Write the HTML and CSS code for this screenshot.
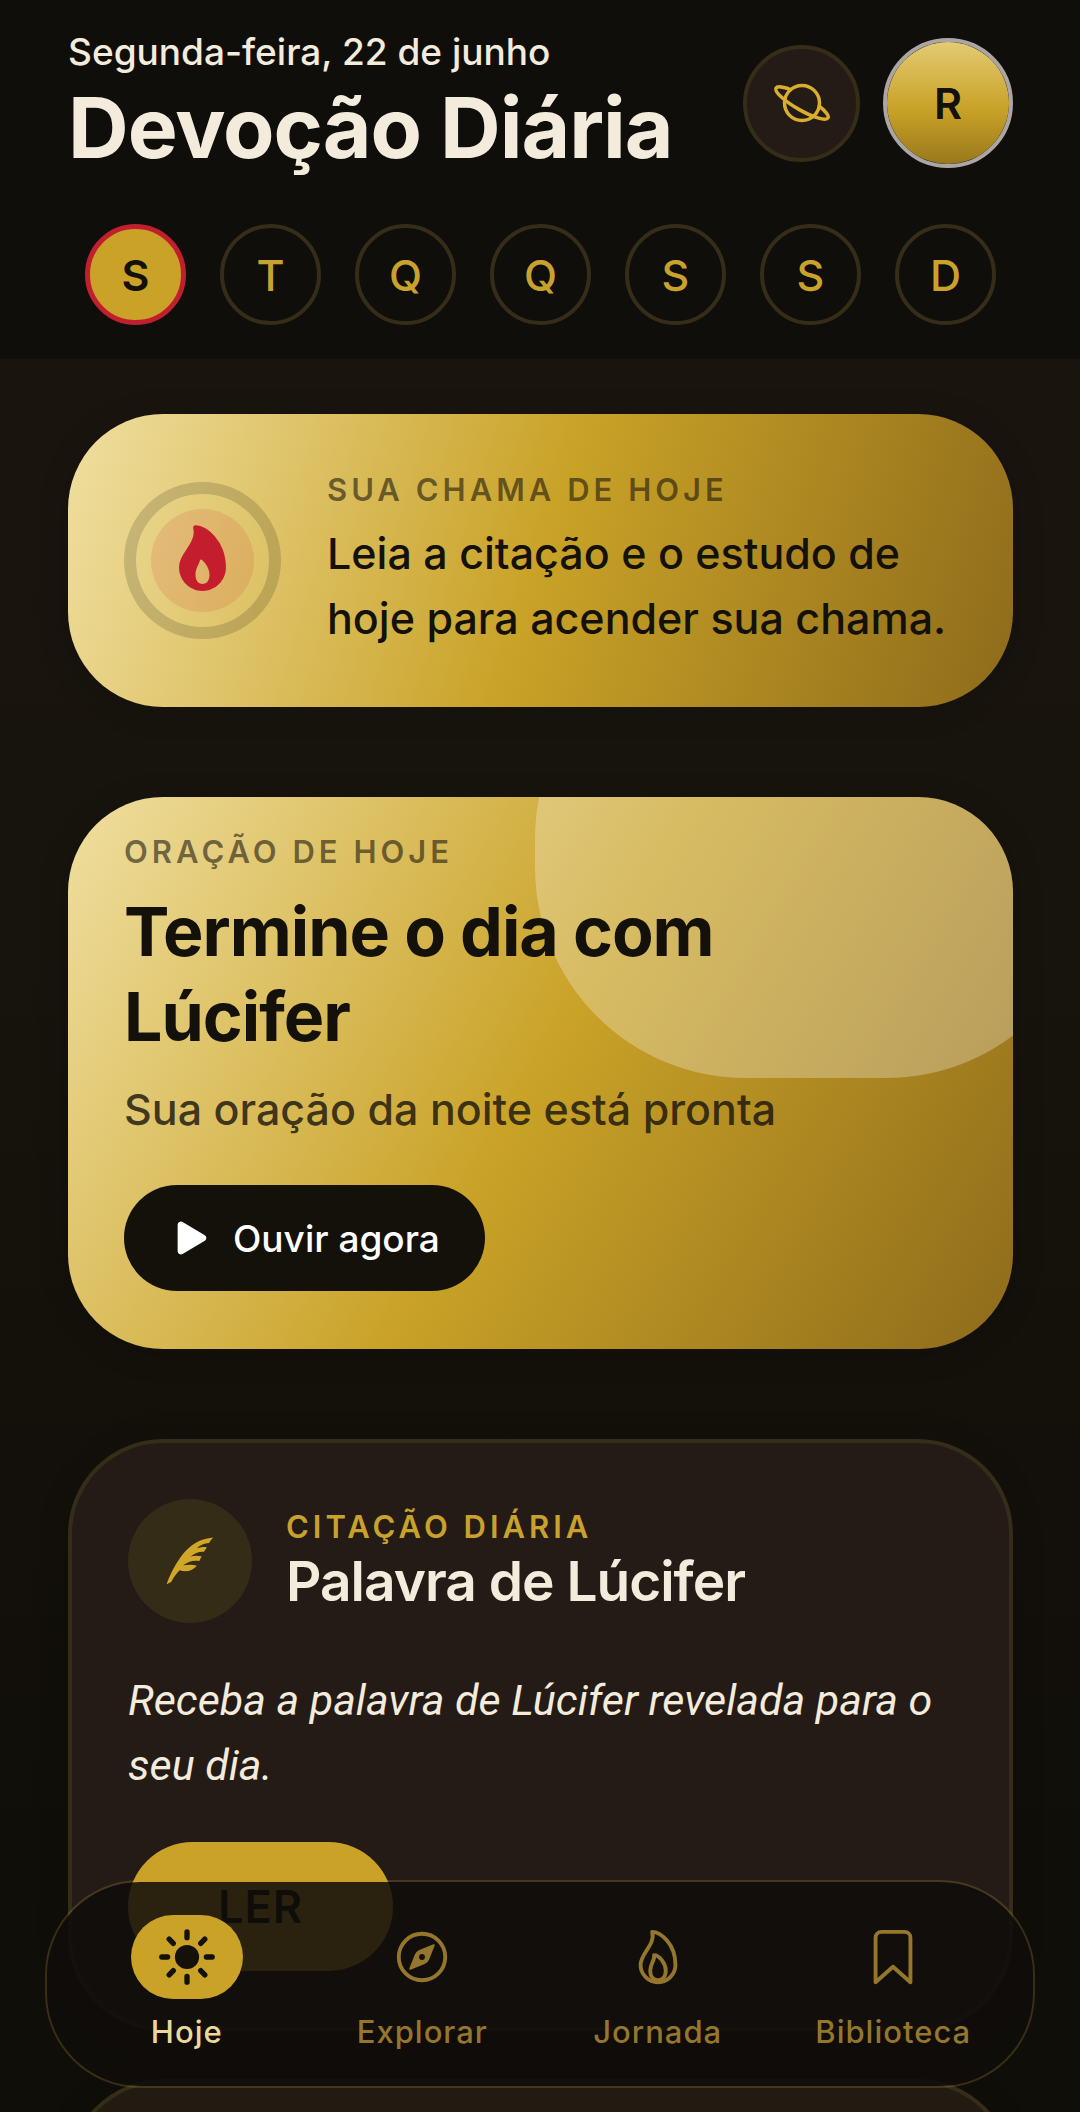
FILE: index.html
```html
<!DOCTYPE html>
<html lang="pt-BR">
<head>
<meta charset="UTF-8">
<meta name="viewport" content="width=device-width, initial-scale=1.0">
<title>Devoção Diária</title>
<link rel="stylesheet" href="styles.css">
</head>
<body>
<div class="app">
  <header class="header">
    <div class="header-top">
      <div class="header-text">
        <p class="date">Segunda-feira, 22 de junho</p>
        <h1 class="title">Devoção Diária</h1>
      </div>
      <div class="header-actions">
        <button class="planet-button" type="button">
          <svg class="icon-planet" viewBox="0 0 512 512" fill="none" stroke="currentColor" stroke-width="32" stroke-linecap="round" stroke-miterlimit="10">
            <path d="M413.48 284.46c58.87 47.24 91.61 89 80.31 108.55-17.85 30.85-138.78-5.48-270.1-81.15S.37 149.84 18.21 119c11.16-19.28 62.58-12.32 131.64 14.09"/>
            <circle cx="256" cy="256" r="160"/>
          </svg>
        </button>
        <button class="avatar" type="button">R</button>
      </div>
    </div>
    <div class="days">
      <button class="day active" type="button">S</button>
      <button class="day" type="button">T</button>
      <button class="day" type="button">Q</button>
      <button class="day" type="button">Q</button>
      <button class="day" type="button">S</button>
      <button class="day" type="button">S</button>
      <button class="day" type="button">D</button>
    </div>
  </header>

  <main class="content">
    <section class="card flame-card">
      <div class="ring">
        <div class="ring-inner">
          <svg class="icon-flame" viewBox="0 16 512 512" fill="currentColor">
            <path d="M394.23 197.56a300.67 300.67 0 0 0-53.37-90C301.2 61.65 249.05 32 208 32a16 16 0 0 0-15.48 20c13.87 53-14.88 97.07-45.31 143.72C122 234.36 96 274.27 96 320c0 88.22 71.78 160 160 160s160-71.78 160-160c0-43.3-7.32-84.49-21.77-122.44zM288.33 418.69C278 429.69 265.05 432 256 432s-22-2.31-32.33-13.31S208 390.24 208 368c0-25.14 8.82-44.28 17.34-62.78 4.95-10.74 10-21.67 13-33.37a8 8 0 0 1 12.49-4.51A126.48 126.48 0 0 1 275 292c18.17 24 29 52.42 29 76 0 22.24-5.32 39.72-15.67 50.69z"/>
          </svg>
        </div>
      </div>
      <div class="flame-text">
        <p class="label">SUA CHAMA DE HOJE</p>
        <p class="flame-message">Leia a citação e o estudo de hoje para acender sua chama.</p>
      </div>
    </section>

    <section class="card prayer-card">
      <p class="label">ORAÇÃO DE HOJE</p>
      <h2 class="prayer-title">Termine o dia com Lúcifer</h2>
      <p class="prayer-subtitle">Sua oração da noite está pronta</p>
      <button class="listen-button" type="button">
        <svg class="icon-play" viewBox="0 0 512 512" fill="currentColor">
          <path d="M133 440a35.37 35.37 0 0 1-17.5-4.67c-12-6.8-19.46-20-19.46-34.33V111c0-14.37 7.46-27.53 19.46-34.33a35.13 35.13 0 0 1 35.77.45l247.85 148.36a36 36 0 0 1 0 61l-247.89 148.4A35.5 35.5 0 0 1 133 440z"/>
        </svg>
        Ouvir agora
      </button>
    </section>

    <section class="card dark-card">
      <div class="quote-head">
        <div class="quote-icon">
          <svg class="icon-feather" viewBox="0 0 24 24" fill="currentColor">
            <path d="M22 2S14.36 1.63 8.34 9.88C3.72 16.21 2 22 2 22l1.94-1C5.38 18.5 6.13 17.47 7.54 16c2.53.74 5.17.65 7.46-2-2-.56-3.6-.43-5.96-.19C11.69 12 13.5 11.6 16 12l1-2c-1.8-.34-3-.37-4.78.04C14.19 8.65 15.56 7.87 18 8l1.21-1.93c-1.56-.11-2.5.06-4.29.5C16.53 5.11 18 4.45 20.14 4.32c0 0 1.05-1.89 1.86-2.32z"/>
          </svg>
        </div>
        <div>
          <p class="label gold">CITAÇÃO DIÁRIA</p>
          <h2 class="quote-title">Palavra de Lúcifer</h2>
        </div>
      </div>
      <p class="quote-text">Receba a palavra de Lúcifer revelada para o seu dia.</p>
      <button class="read-button" type="button">LER</button>
    </section>

    <section class="card dark-card next-card"></section>
  </main>

  <nav class="tab-bar">
    <a class="tab active" href="#hoje">
      <span class="tab-icon">
        <svg viewBox="0 0 512 512" fill="none" stroke="currentColor" stroke-width="44" stroke-linecap="round">
          <path d="M256 48v48M256 416v48M403.08 108.92l-33.94 33.94M142.86 369.14l-33.94 33.94M464 256h-48M96 256H48M403.08 403.08l-33.94-33.94M142.86 142.86l-33.94-33.94"/>
          <circle cx="256" cy="256" r="100" fill="currentColor" stroke="none"/>
        </svg>
      </span>
      Hoje
    </a>
    <a class="tab" href="#explorar">
      <span class="tab-icon">
        <svg viewBox="0 0 512 512" fill="none">
          <circle cx="256" cy="256" r="192" stroke="currentColor" stroke-width="32"/>
          <path fill="currentColor" d="M350.67 150.93l-117.2 46.88a64 64 0 0 0-35.66 35.66l-46.88 117.2a8 8 0 0 0 10.4 10.4l117.2-46.88a64 64 0 0 0 35.66-35.66l46.88-117.2a8 8 0 0 0-10.4-10.4zM256 280a24 24 0 1 1 24-24 24 24 0 0 1-24 24z"/>
        </svg>
      </span>
      Explorar
    </a>
    <a class="tab" href="#jornada">
      <span class="tab-icon">
        <svg viewBox="0 0 512 512" fill="none" stroke="currentColor" stroke-width="32" stroke-linejoin="round">
          <path d="M112 320c0-93 124-165 96-272 66 0 192 96 192 272a144 144 0 0 1-288 0z"/>
          <path d="M320 368c0 57.71-32 80-64 80s-64-22.29-64-80 40-86 32-128c42 0 96 70.29 96 128z"/>
        </svg>
      </span>
      Jornada
    </a>
    <a class="tab" href="#biblioteca">
      <span class="tab-icon">
        <svg viewBox="0 0 512 512" fill="none" stroke="currentColor" stroke-width="32" stroke-linejoin="round">
          <path d="M352 48H160a48 48 0 0 0-48 48v368l144-128 144 128V96a48 48 0 0 0-48-48z"/>
        </svg>
      </span>
      Biblioteca
    </a>
  </nav>
</div>
</body>
</html>
```

FILE: styles.css
```css
* {
  margin: 0;
  padding: 0;
  box-sizing: border-box;
}

body {
  background: #0f0d09;
  font-family: Inter, "Liberation Sans", sans-serif;
  color: #f3ebdc;
}

button {
  font-family: inherit;
  border: none;
  cursor: pointer;
}

.app {
  position: relative;
  height: 100vh;
  display: flex;
  flex-direction: column;
  overflow: hidden;
  background: linear-gradient(#1b1510, #17130d 45%, #100e09 90%);
}

/* Header */
.header {
  padding: 28px 67px 34px 68px;
  background: #100e0b;
}

.header-top {
  display: flex;
  justify-content: space-between;
  align-items: center;
  margin-bottom: 46px;
}

.date {
  font-size: 37px;
  line-height: 48px;
  font-weight: 500;
  margin-bottom: 2px;
}

.title {
  font-size: 84px;
  line-height: 100px;
  font-weight: 700;
  letter-spacing: -1px;
}

.header-actions {
  display: flex;
  align-items: center;
  gap: 23px;
}

.planet-button {
  width: 117px;
  height: 117px;
  display: flex;
  align-items: center;
  justify-content: center;
  border: 4px solid #352d17;
  border-radius: 50%;
  background: #241b16;
  color: #d9ae2f;
}

.icon-planet {
  width: 56px;
  height: 56px;
  overflow: visible;
}

.avatar {
  width: 130px;
  height: 130px;
  border: 4px solid #aba5a3;
  border-radius: 50%;
  background: linear-gradient(#e3cb74, #c9a227 55%, #98781c) padding-box;
  color: #14110b;
  font-size: 43px;
  font-weight: 600;
}

/* Week days */
.days {
  display: grid;
  grid-template-columns: repeat(7, 1fr);
  justify-items: center;
}

.day {
  width: 101px;
  height: 101px;
  border: 4px solid #352d17;
  border-radius: 50%;
  background: transparent;
  color: #c9a22e;
  font-size: 43px;
  font-weight: 500;
}

.day.active {
  border: 5px solid #bf1f2e;
  background: #c9a227;
  color: #14110b;
  font-weight: 600;
}

/* Cards */
.content {
  flex: 1;
  padding: 55px 67px 0 68px;
  overflow: hidden;
}

.card {
  border-radius: 95px;
  margin-bottom: 90px;
  box-shadow: 0 4px 32px rgba(10, 8, 5, 0.16);
}

.label {
  font-size: 31px;
  line-height: 40px;
  font-weight: 600;
  letter-spacing: 4px;
  color: rgba(20, 17, 11, 0.58);
}

.label.gold {
  color: #c9a22e;
}

.flame-card {
  display: flex;
  align-items: center;
  gap: 46px;
  padding: 56px;
  background: linear-gradient(107deg, #f0dfa0, #c9a227 50%, #8e6b1b);
}

.ring {
  flex-shrink: 0;
  width: 157px;
  height: 157px;
  display: flex;
  align-items: center;
  justify-content: center;
  border: 12px solid rgba(20, 17, 11, 0.16);
  border-radius: 50%;
}

.ring-inner {
  width: 103px;
  height: 103px;
  display: flex;
  align-items: center;
  justify-content: center;
  border-radius: 50%;
  background: rgba(204, 60, 50, 0.14);
  color: #c41e2e;
}

.icon-flame {
  width: 75px;
  height: 75px;
}

.flame-text .label {
  margin-bottom: 11px;
}

.flame-message {
  font-size: 43px;
  line-height: 65px;
  font-weight: 500;
  color: #14110b;
}

.prayer-card {
  position: relative;
  overflow: hidden;
  padding: 35px 56px 58px;
  background: linear-gradient(120deg, #f0dfa0, #c9a227 50%, #8e6b1b);
}

/* Light shape in the corner, under the text */
.prayer-card::before {
  content: '';
  position: absolute;
  top: -169px;
  right: -84px;
  width: 562px;
  height: 450px;
  border-radius: 211px;
  background: rgba(255, 255, 255, 0.28);
}

.prayer-card > * {
  position: relative;
}

.prayer-title {
  margin-top: 17px;
  max-width: 640px;
  font-size: 68px;
  line-height: 85px;
  font-weight: 700;
  letter-spacing: -1px;
  color: #14110b;
}

.prayer-subtitle {
  margin: 20px 0 46px;
  font-size: 43px;
  line-height: 60px;
  font-weight: 500;
  color: rgba(20, 17, 11, 0.8);
}

.listen-button {
  display: flex;
  align-items: center;
  gap: 18px;
  height: 106px;
  padding: 0 45px;
  border-radius: 53px;
  background: #14110b;
  color: #fff;
  font-size: 37px;
  font-weight: 500;
}

.icon-play {
  width: 46px;
  height: 46px;
}

.dark-card {
  padding: 56px;
  border: 4px solid #352d17;
  background: #241b16;
  margin-bottom: 48px;
}

.quote-head {
  display: flex;
  align-items: center;
  gap: 34px;
  margin-bottom: 45px;
}

.quote-icon {
  width: 124px;
  height: 124px;
  display: flex;
  align-items: center;
  justify-content: center;
  border-radius: 50%;
  background: #352c17;
  color: #d0a728;
}

.icon-feather {
  width: 56px;
  height: 56px;
}

.quote-title {
  font-size: 55px;
  line-height: 68px;
  font-weight: 600;
  letter-spacing: -1px;
}

.quote-text {
  font-family: Roboto, "Liberation Sans", sans-serif;
  font-size: 43px;
  line-height: 65px;
  font-style: italic;
  margin-bottom: 44px;
}

.read-button {
  height: 129px;
  padding: 0 90px;
  border-radius: 65px;
  background: #c9a227;
  color: #14110b;
  font-size: 45px;
  font-weight: 600;
  letter-spacing: 1px;
}

.next-card {
  height: 300px;
  background: #211b12;
}

/* Bottom tabs, float over the cards */
.tab-bar {
  position: absolute;
  left: 45px;
  right: 45px;
  bottom: 24px;
  display: grid;
  grid-template-columns: repeat(4, 1fr);
  padding: 33px 22px 34px;
  border: 2px solid rgba(201, 162, 58, 0.22);
  border-radius: 95px;
  background: rgba(15, 13, 10, 0.86);
  background-clip: padding-box;
}

.tab {
  display: flex;
  flex-direction: column;
  align-items: center;
  gap: 13px;
  font-size: 31px;
  line-height: 40px;
  font-weight: 500;
  letter-spacing: 1px;
  color: #94762c;
  text-decoration: none;
}

.tab.active {
  color: #ecd998;
}

.tab-icon {
  width: 112px;
  height: 84px;
  display: flex;
  align-items: center;
  justify-content: center;
  border-radius: 42px;
}

.tab.active .tab-icon {
  background: #c9a227;
  color: #14110b;
}

.tab-icon svg {
  width: 62px;
  height: 62px;
}
```
